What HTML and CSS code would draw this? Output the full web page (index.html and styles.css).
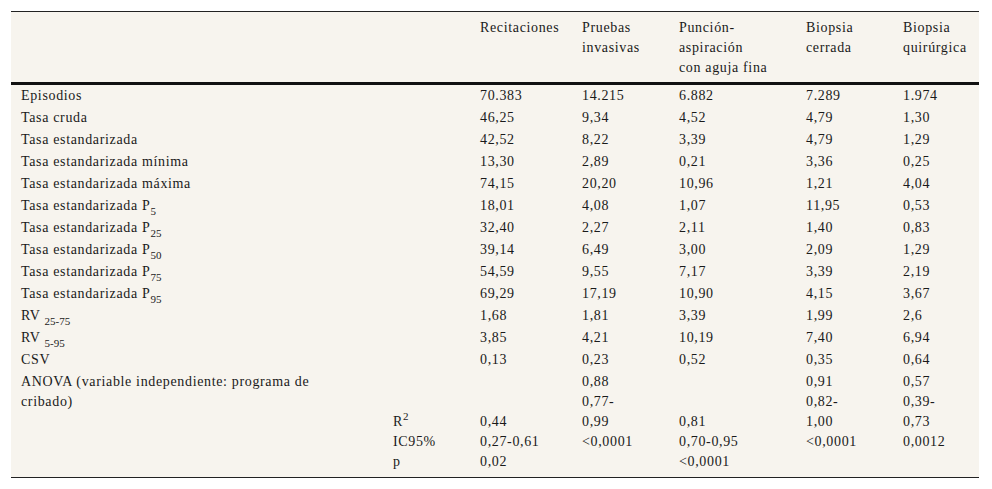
FILE: index.html
```html
<!DOCTYPE html>
<html lang="es">
<head>
<meta charset="utf-8">
<title>Tabla</title>
<link rel="stylesheet" href="styles.css">
</head>
<body>
<div class="wrap">
<table class="data">
  <colgroup>
    <col class="c1"><col class="c2"><col class="c3"><col class="c4"><col class="c5"><col class="c6"><col class="c7">
  </colgroup>
  <thead>
    <tr>
      <th></th><th></th>
      <th>Recitaciones</th>
      <th>Pruebas<br>invasivas</th>
      <th>Punción-<br>aspiración<br>con aguja fina</th>
      <th>Biopsia<br>cerrada</th>
      <th>Biopsia<br>quirúrgica</th>
    </tr>
  </thead>
  <tbody>
    <tr><td>Episodios</td><td></td><td>70.383</td><td>14.215</td><td>6.882</td><td>7.289</td><td>1.974</td></tr>
    <tr><td>Tasa cruda</td><td></td><td>46,25</td><td>9,34</td><td>4,52</td><td>4,79</td><td>1,30</td></tr>
    <tr><td>Tasa estandarizada</td><td></td><td>42,52</td><td>8,22</td><td>3,39</td><td>4,79</td><td>1,29</td></tr>
    <tr><td>Tasa estandarizada mínima</td><td></td><td>13,30</td><td>2,89</td><td>0,21</td><td>3,36</td><td>0,25</td></tr>
    <tr><td>Tasa estandarizada máxima</td><td></td><td>74,15</td><td>20,20</td><td>10,96</td><td>1,21</td><td>4,04</td></tr>
    <tr><td>Tasa estandarizada P<sub>5</sub></td><td></td><td>18,01</td><td>4,08</td><td>1,07</td><td>11,95</td><td>0,53</td></tr>
    <tr><td>Tasa estandarizada P<sub>25</sub></td><td></td><td>32,40</td><td>2,27</td><td>2,11</td><td>1,40</td><td>0,83</td></tr>
    <tr><td>Tasa estandarizada P<sub>50</sub></td><td></td><td>39,14</td><td>6,49</td><td>3,00</td><td>2,09</td><td>1,29</td></tr>
    <tr><td>Tasa estandarizada P<sub>75</sub></td><td></td><td>54,59</td><td>9,55</td><td>7,17</td><td>3,39</td><td>2,19</td></tr>
    <tr><td>Tasa estandarizada P<sub>95</sub></td><td></td><td>69,29</td><td>17,19</td><td>10,90</td><td>4,15</td><td>3,67</td></tr>
    <tr><td>RV <sub>25-75</sub></td><td></td><td>1,68</td><td>1,81</td><td>3,39</td><td>1,99</td><td>2,6</td></tr>
    <tr><td>RV <sub>5-95</sub></td><td></td><td>3,85</td><td>4,21</td><td>10,19</td><td>7,40</td><td>6,94</td></tr>
    <tr><td>CSV</td><td></td><td>0,13</td><td>0,23</td><td>0,52</td><td>0,35</td><td>0,64</td></tr>
    <tr class="last">
      <td class="top">ANOVA (variable independiente: programa de<br>cribado)</td>
      <td class="bottom">R<sup>2</sup><br>IC95%<br>p</td>
      <td class="bottom">0,44<br>0,27-0,61<br>0,02</td>
      <td class="top">0,88<br>0,77-<br>0,99<br>&lt;0,0001</td>
      <td class="bottom">0,81<br>0,70-0,95<br>&lt;0,0001</td>
      <td class="top">0,91<br>0,82-<br>1,00<br>&lt;0,0001</td>
      <td class="top">0,57<br>0,39-<br>0,73<br>0,0012</td>
    </tr>
  </tbody>
</table>
</div>
</body>
</html>
```

FILE: styles.css
```css
html, body {
  margin: 0;
  padding: 0;
  background: #ffffff;
}

.wrap {
  padding: 11px 13px 0 11px;
}

.data {
  width: 968px;
  table-layout: fixed;
  border-collapse: collapse;
  background: #f7f4ee;
  font-family: "Liberation Serif", "Times New Roman", serif;
  font-size: 14px;
  line-height: 20px;
  color: #1a1a1a;
  border-top: 1px solid #222;
  border-bottom: 1px solid #222;
}

.c1 { width: 372px; }
.c2 { width: 87px; }
.c3 { width: 102px; }
.c4 { width: 97px; }
.c5 { width: 127px; }
.c6 { width: 97px; }
.c7 { width: 86px; }

.data th {
  font-weight: normal;
  text-align: left;
  vertical-align: top;
  padding: 6px 2px 4px 10px;
  border-bottom: 3px solid #111;
  letter-spacing: 0.65px;
}

.data td {
  text-align: left;
  vertical-align: top;
  padding: 1px 2px 1px 10px;
  white-space: nowrap;
  letter-spacing: 0.65px;
}

.data td.top { vertical-align: top; }
.data td.bottom { vertical-align: bottom; }

.data tr.last td {
  height: 100px;
  padding-bottom: 5px;
}

.data sub {
  font-size: 11px;
  line-height: 0;
  vertical-align: -5px;
  letter-spacing: 0;
}

.data sup {
  font-size: 11px;
  line-height: 0;
  vertical-align: 6px;
  letter-spacing: 0;
}
```
